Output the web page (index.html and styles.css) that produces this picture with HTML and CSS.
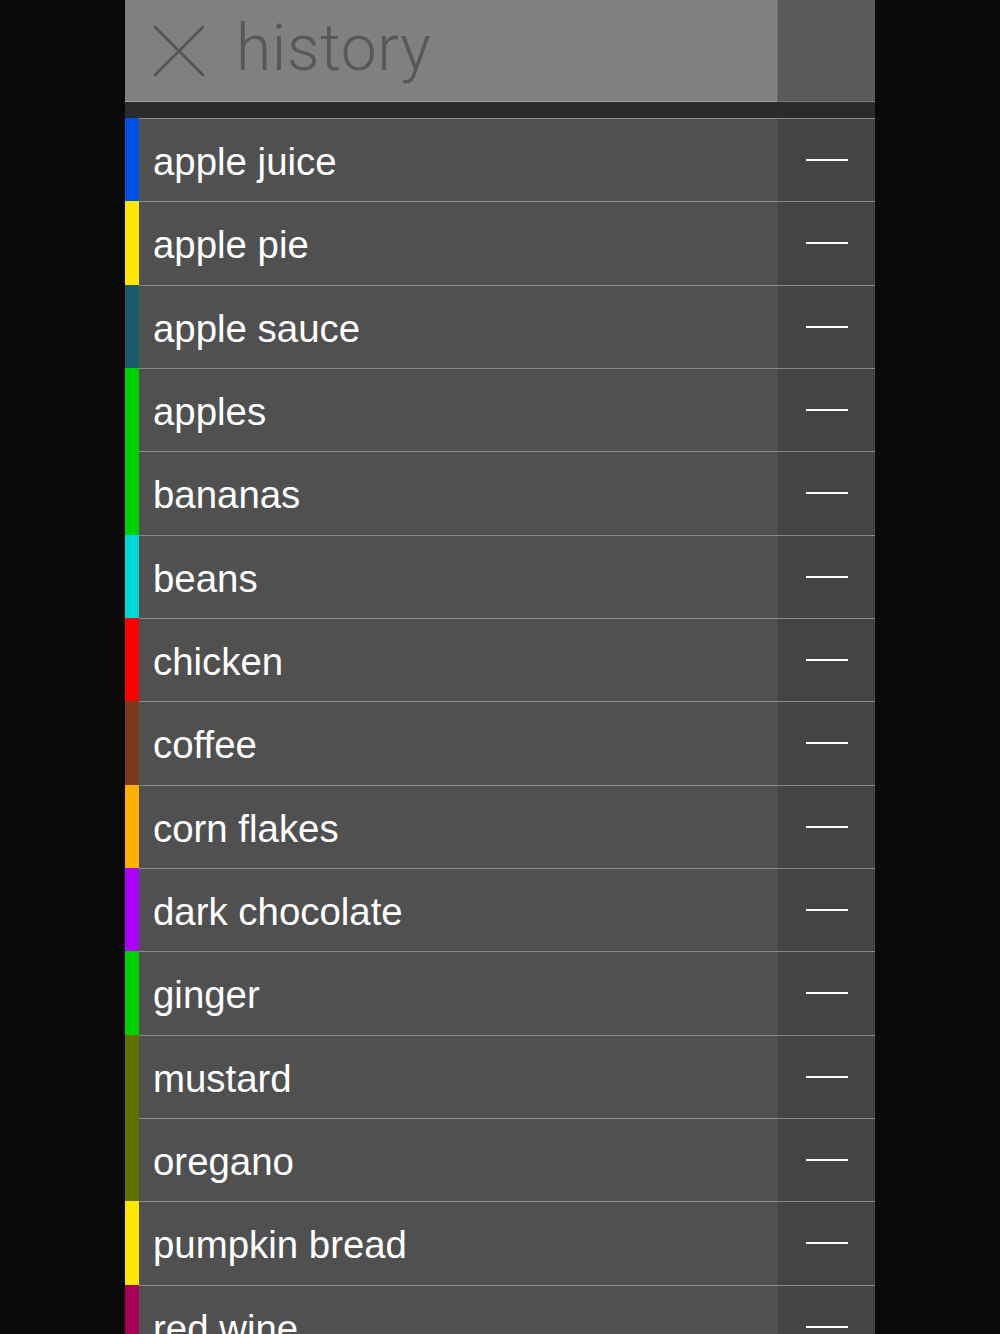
FILE: index.html
```html
<!DOCTYPE html>
<html>
<head>
<meta charset="utf-8">
<link rel="stylesheet" href="styles.css">
</head>
<body>
<div class="panel">
  <div class="header">
    <div class="header-main">
      <svg class="close" width="52" height="52" viewBox="0 0 52 52"><path d="M2 2 L50 50 M50 2 L2 50" stroke="#555555" stroke-width="2.6" stroke-linecap="round" fill="none"/></svg>
      <span class="title">history</span>
    </div>
    <div class="header-side"></div>
  </div>
  <div class="band"></div>
  <div class="list">
    <div class="row"><div class="strip c-blue"></div><div class="cell"><div class="label">apple juice</div><div class="action"><span class="dash"></span></div></div></div>
    <div class="row"><div class="strip c-yellow"></div><div class="cell"><div class="label">apple pie</div><div class="action"><span class="dash"></span></div></div></div>
    <div class="row"><div class="strip c-teal"></div><div class="cell"><div class="label">apple sauce</div><div class="action"><span class="dash"></span></div></div></div>
    <div class="row"><div class="strip c-green"></div><div class="cell"><div class="label">apples</div><div class="action"><span class="dash"></span></div></div></div>
    <div class="row"><div class="strip c-green"></div><div class="cell"><div class="label">bananas</div><div class="action"><span class="dash"></span></div></div></div>
    <div class="row"><div class="strip c-cyan"></div><div class="cell"><div class="label">beans</div><div class="action"><span class="dash"></span></div></div></div>
    <div class="row"><div class="strip c-red"></div><div class="cell"><div class="label">chicken</div><div class="action"><span class="dash"></span></div></div></div>
    <div class="row"><div class="strip c-brown"></div><div class="cell"><div class="label">coffee</div><div class="action"><span class="dash"></span></div></div></div>
    <div class="row"><div class="strip c-orange"></div><div class="cell"><div class="label">corn flakes</div><div class="action"><span class="dash"></span></div></div></div>
    <div class="row"><div class="strip c-purple"></div><div class="cell"><div class="label">dark chocolate</div><div class="action"><span class="dash"></span></div></div></div>
    <div class="row"><div class="strip c-green"></div><div class="cell"><div class="label">ginger</div><div class="action"><span class="dash"></span></div></div></div>
    <div class="row"><div class="strip c-olive"></div><div class="cell"><div class="label">mustard</div><div class="action"><span class="dash"></span></div></div></div>
    <div class="row"><div class="strip c-olive"></div><div class="cell"><div class="label">oregano</div><div class="action"><span class="dash"></span></div></div></div>
    <div class="row"><div class="strip c-yellow"></div><div class="cell"><div class="label">pumpkin bread</div><div class="action"><span class="dash"></span></div></div></div>
    <div class="row"><div class="strip c-magenta"></div><div class="cell"><div class="label">red wine</div><div class="action"><span class="dash"></span></div></div></div>
  </div>
</div>
</body>
</html>
```
FILE: styles.css
```css
html, body {
  margin: 0;
  padding: 0;
  background: #0a0a0a;
  height: 1334px;
  overflow: hidden;
}
.panel {
  width: 750px;
  margin-left: 125px;
  font-family: "Liberation Sans", Arial, sans-serif;
}
.header {
  display: flex;
  height: 102px;
  box-sizing: border-box;
}
.header-main {
  width: 652px;
  background: #808080;
  border-bottom: 1px solid #a2a2a2;
  display: flex;
  align-items: center;
  box-sizing: border-box;
  padding-left: 28px;
}
.header-side {
  flex: 1;
  background: #5a5a5a;
  border-left: 1px solid #6a6a6a;
  border-bottom: 1px solid #7c7c7c;
  box-sizing: border-box;
}
.close {
  display: block;
  margin-right: 31px;
}
.title {
  font-family: "Roboto", "Liberation Sans", sans-serif;
  font-weight: 300;
  font-size: 64px;
  color: #585858;
  letter-spacing: 0.7px;
  line-height: 1;
  margin-top: -4px;
}
.band {
  height: 16px;
  background: #2b2b2b;
}
.row {
  display: flex;
  height: 83.333px;
}
.strip {
  width: 14px;
  flex: 0 0 14px;
}
.cell {
  flex: 1;
  display: flex;
  border-top: 1px solid #8a8a8a;
  box-sizing: border-box;
}
.label {
  flex: 1;
  background: #505050;
  color: #ffffff;
  font-size: 38.4px;
  display: flex;
  align-items: center;
  padding-left: 14px;
  padding-top: 4px;
}
.action {
  width: 98px;
  background: #444444;
  border-left: 1px solid #4a4a4a;
  box-sizing: border-box;
  display: flex;
  align-items: center;
  padding-left: 28px;
}
.dash {
  display: block;
  width: 42px;
  height: 2px;
  background: #ffffff;
}
.c-blue { background: #0050e6; }
.c-yellow { background: #ffe800; }
.c-teal { background: #1a5a6c; }
.c-green { background: #00d200; }
.c-cyan { background: #00d8d8; }
.c-red { background: #ff0000; }
.c-brown { background: #7a3a1c; }
.c-orange { background: #ffb000; }
.c-purple { background: #aa00ff; }
.c-olive { background: #627200; }
.c-magenta { background: #aa0055; }
```
